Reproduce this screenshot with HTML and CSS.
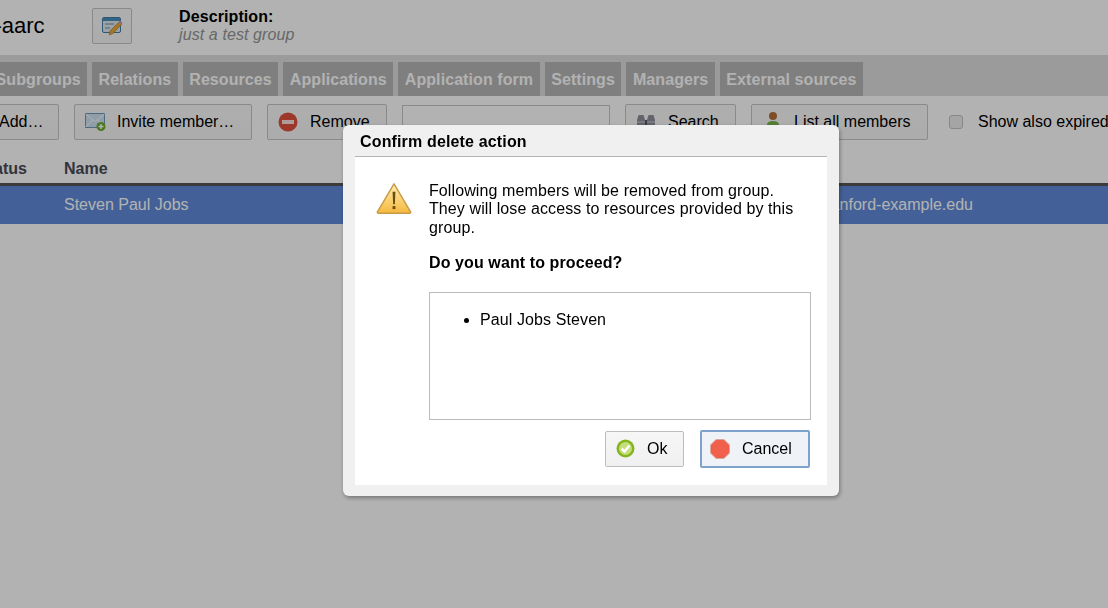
FILE: index.html
```html
<!DOCTYPE html>
<html lang="en">
<head>
<meta charset="utf-8">
<title>Group members</title>
<link rel="stylesheet" href="styles.css">
</head>
<body>
<div class="page">
  <header class="head">
    <h1 class="group-name">test-aarc</h1>
    <button class="btn icon-only" type="button">
      <svg width="21" height="20" viewBox="0 0 21 20"><rect x=".5" y="1.500" width="18" height="15" rx="1.500" fill="#dbe8f0" stroke="#3f7fa8"/><rect x="1" y="2" width="17" height="3" fill="#4a90bd"/><rect x="3" y="7" width="9" height="2" fill="#a9b9c4"/><rect x="3" y="11" width="5" height="2" fill="#a9b9c4"/><path d="M17.500 5.500 20 8 11 17.500l-4 1.500 1-4z" fill="#e8a93a" stroke="#b07820" stroke-width=".6"/><path d="M16.500 6.500l1.500-2 2.500 2-1 2z" fill="#c49ac4"/></svg>
    </button>
    <div class="desc">
      <strong>Description:</strong>
      <em>just a test group</em>
    </div>
  </header>

  <nav class="tabs">
    <a class="tab first">Subgroups</a>
    <a class="tab">Relations</a>
    <a class="tab">Resources</a>
    <a class="tab">Applications</a>
    <a class="tab">Application form</a>
    <a class="tab">Settings</a>
    <a class="tab">Managers</a>
    <a class="tab">External sources</a>
  </nav>

  <div class="toolbar">
    <button class="btn add" type="button">Add…</button>
    <button class="btn invite" type="button">
      <svg width="22" height="20" viewBox="0 0 22 20"><rect x=".5" y="1.500" width="19" height="14" fill="#cfe3f2" stroke="#6f9ab8"/><path d="M.5 2 10 9.500 19.500 2M.5 15l7-7M19.500 15l-7-7" fill="none" stroke="#fff"/><circle cx="16" cy="14.500" r="4.500" fill="#6cae2e"/><path d="M16 12v5M13.500 14.500h5" stroke="#fff" stroke-width="1.500"/></svg>
      Invite member…
    </button>
    <button class="btn remove" type="button">
      <svg width="20" height="20" viewBox="0 0 20 20"><circle cx="10" cy="10" r="9.500" fill="#e0503c"/><rect x="4" y="8" width="12" height="4" fill="#fbe0dc"/></svg>
      Remove
    </button>
    <input class="search-input" type="text">
    <button class="btn search" type="button">
      <svg width="20" height="18" viewBox="0 0 20 18"><path d="M1 16V7l1.500-5h5L9 7v9zM11 16V7l1.500-5h5L19 7v9z" fill="#8f8f9c"/><path d="M9 7h2v5H9z" fill="#555"/><path d="M1 9h8M11 9h8" stroke="#c8c8d0"/></svg>
      Search
    </button>
    <button class="btn list" type="button">
      <svg width="16" height="22" viewBox="0 0 16 22"><circle cx="8" cy="5" r="4" fill="#b5703c"/><path d="M2 20v-6q0-4 6-4t6 4v6z" fill="#78b54a"/></svg>
      List all members
    </button>
    <label class="check"><input class="box" type="checkbox">Show also expired</label>
  </div>

  <div class="table">
    <div class="row-head">
      <span class="col-status">Status</span>
      <span class="col-name">Name</span>
    </div>
    <div class="row-data">
      <span class="col-name">Steven Paul Jobs</span>
      <span class="col-mail">steve@stanford-example.edu</span>
    </div>
  </div>
</div>

<div class="overlay"></div>

<section class="dialog">
  <h2 class="dialog-title">Confirm delete action</h2>
  <div class="dialog-body">
    <svg class="warn" width="36" height="33" viewBox="0 0 38 34"><defs><linearGradient id="w" x1="0" y1="0" x2="0" y2="1"><stop offset="0" stop-color="#fff0b0"/><stop offset="1" stop-color="#f5b93f"/></linearGradient></defs><path d="M19 1.500 36.500 31q.5 1.500-1 1.500h-33q-1.500 0-1-1.500z" fill="url(#w)" stroke="#c99a45" stroke-width="1.500" stroke-linejoin="round"/><path d="M17.500 10h3l-.6 13h-1.800z" fill="#6b4d10"/><rect x="17.500" y="25" width="3" height="3.200" fill="#6b4d10"/></svg>
    <div class="dialog-main">
      <p class="msg">Following members will be removed from group. They will lose access to resources provided by this group.</p>
      <p class="ask">Do you want to proceed?</p>
      <div class="names"><ul><li>Paul Jobs Steven</li></ul></div>
      <div class="actions">
        <button class="btn ok" type="button">
          <svg width="19" height="19" viewBox="0 0 19 19"><circle cx="9.500" cy="9.500" r="9" fill="#84b51e"/><circle cx="9.500" cy="9.500" r="6.500" fill="#c5de7a"/><path d="M5.500 9.500 8.500 12.500 13.500 6.500" fill="none" stroke="#fff" stroke-width="2.500"/></svg>
          Ok
        </button>
        <button class="btn cancel" type="button">
          <svg width="20" height="20" viewBox="0 0 20 20"><path d="M6 .5h8L19.500 6v8L14 19.500H6L.5 14V6z" fill="#f0604c" stroke="#d9a79f"/></svg>
          Cancel
        </button>
      </div>
    </div>
  </div>
</section>
</body>
</html>
```
FILE: styles.css
```css
* { box-sizing: border-box; }
html, body { margin: 0; height: 100%; overflow: hidden; }
body { background: #fff; font: 16px/18.4px "Liberation Sans", Arial, sans-serif; color: #000; }

.page { width: 1108px; height: 608px; overflow: hidden; }

.head { display: flex; align-items: center; height: 55px; padding-bottom: 3px; }
.group-name { margin: 0 0 0 -41px; width: 133px; flex: none; font-size: 22px; font-weight: 400; white-space: nowrap; }
.desc { margin-left: 47px; display: flex; flex-direction: column; letter-spacing: .1px; }
.desc em { color: #959595; }

.btn {
  display: inline-flex; align-items: center; flex: none; height: 36px; padding: 0;
  font: 16px/18px "Liberation Sans", Arial, sans-serif; color: #000; white-space: nowrap; letter-spacing: 0;
  background: linear-gradient(#fafafa, #f6f6f6); border: 1px solid #c6c6c6; border-radius: 2px;
}
.icon-only { width: 40px; justify-content: center; }

.tabs { display: flex; gap: 5px; height: 41px; padding-top: 7px; background: #dedede; }
.tab { display: flex; align-items: center; height: 34px; padding: 2px 6.500px 0; font-weight: 700; letter-spacing: .08px; color: #fff; background: #b6b6b6; white-space: nowrap; }
.tab.first { margin-left: -7px; padding-left: 2.600px; width: 94px; }

.toolbar { display: flex; align-items: center; gap: 15px; height: 36px; margin-top: 8px; }
.add { width: 73px; margin-left: -14px; padding-left: 12px; }
.invite { width: 178px; padding-left: 10px; gap: 10px; }
.remove { width: 120px; padding-left: 10px; gap: 12px; }
.search-input { width: 208px; height: 34px; flex: none; border: 1px solid #c6c6c6; background: #fff; }
.search { width: 111px; padding-left: 10px; gap: 12px; }
.list { width: 177px; padding-left: 13px; gap: 13px; }
.check { display: flex; align-items: center; margin-left: 6px; white-space: nowrap; }
.box { appearance: none; width: 14px; height: 14px; margin: 0 15px 0 0; flex: none; background: #ededed; border: 1px solid #c2c2c2; border-radius: 3px; }

.table { margin-top: 17px; }
.row-head, .row-data { display: flex; align-items: center; padding-left: 64px; position: relative; }
.row-head { height: 29px; font-weight: 700; color: #4a4a55; border-bottom: 3px solid #555; padding-bottom: 1px; }
.row-data { height: 38px; color: #fff; background: #618bda; }
.col-status { margin-left: -86px; width: 86px; flex: none; }
.row-data .col-name { width: 700px; flex: none; }
.row-data .col-mail { position: absolute; right: 135px; }

.overlay { position: fixed; inset: 0; background: rgba(0, 0, 0, .3); }

.dialog {
  position: fixed; left: 343px; top: 125px; width: 496px; height: 371px;
  display: flex; flex-direction: column; padding: 0 12px 11px;
  background: #f0f0f0; border-radius: 6px; box-shadow: 1px 2px 4px rgba(0, 0, 0, .35);
  letter-spacing: .1px;
}
.dialog-title { margin: 0; height: 32px; flex: none; padding: 8px 0 0 5px; font-size: 16px; line-height: 18px; letter-spacing: .15px; border-bottom: 1px solid #b4b4b4; }
.dialog-body { flex: 1; display: flex; align-items: flex-start; background: #fff; padding: 25px 16px 0 21px; }
.warn { flex: none; margin: 0 17px 0 0; }
.dialog-main { flex: 1; min-width: 0; }
.msg { margin: 0 0 17px; max-width: 372px; }
.ask { margin: 0 0 19px; font-weight: 700; }
.names { height: 128px; border: 1px solid #bcbcbc; padding-top: 18px; }
.names ul { margin: 0; padding-left: 50px; }
.actions { display: flex; justify-content: flex-end; align-items: center; gap: 16px; margin: 10px 1px 0 0; }
.ok { width: 79px; padding-left: 10px; gap: 12px; background: linear-gradient(#f6f6f6, #f0f0f0); border-color: #bdbdbd; }
.cancel { width: 110px; height: 38px; padding-left: 8px; gap: 12px; background: #eff3f8; border: 2px solid #7da2cc; }
```
